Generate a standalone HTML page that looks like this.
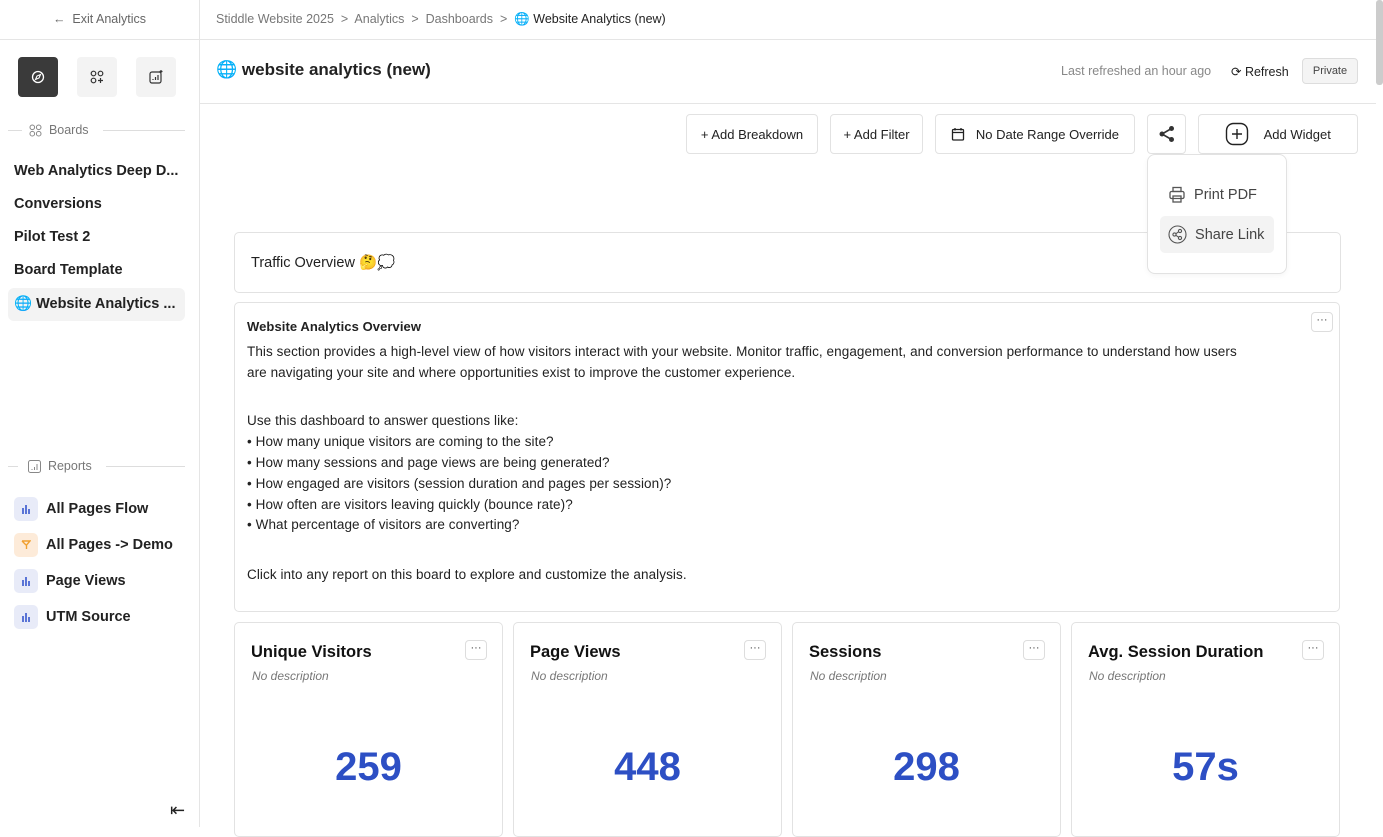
<!DOCTYPE html>
<html><head><style>
*{box-sizing:border-box;margin:0;padding:0}
body{width:1383px;height:827px;overflow:hidden;font-family:"Liberation Sans",sans-serif;background:#fff;color:#1f1f1f;position:relative}
.abs{position:absolute}
.side{left:0;top:0;width:200px;height:827px;border-right:1px solid #e5e5e5}
.btn{position:absolute;border:1px solid #e2e2e2;border-radius:4px;height:40px;top:114px;font-size:13px;display:flex;align-items:center;justify-content:center;color:#222;background:#fff}
.nav{position:absolute;left:14px;font-size:14.5px;font-weight:bold;color:#222}
.rep{position:absolute;left:14px;font-size:14.5px;font-weight:bold;color:#222;display:flex;align-items:center}
.ic{width:24px;height:24px;border-radius:5px;background:#e8ebf8;margin-right:8px;display:flex;align-items:center;justify-content:center}
.card{position:absolute;top:622px;width:269px;height:215px;border:1px solid #e2e2e2;border-radius:5px}
.card h3{position:absolute;left:16px;top:20px;font-size:16.5px;font-weight:bold;color:#111}
.card i{position:absolute;left:17px;top:46px;font-size:12px;color:#777}
.card .n{position:absolute;left:0;right:0;top:122px;text-align:center;font-size:40px;font-weight:bold;color:#2d4fc4}
.dots{position:absolute;width:22px;height:20px;border:1px solid #ddd;border-radius:4px;font-size:11px;text-align:center;line-height:14px;color:#444}
</style></head><body>
<div class="abs side">
 <div class="abs" style="left:0;top:0;width:199px;height:40px;border-bottom:1px solid #e5e5e5;font-size:12.5px;color:#666;text-align:center;line-height:38px">← &nbsp;Exit Analytics</div>
 <div class="abs" style="left:18px;top:57px;width:40px;height:40px;border-radius:4px;background:#3a3a3a;display:flex;align-items:center;justify-content:center"><svg width="14" height="14" viewBox="0 0 14 14"><circle cx="7" cy="7" r="5.5" fill="none" stroke="#fff" stroke-width="1.3"/><path d="M9.5 4.5 L8 8 L4.5 9.5 L6 6Z" fill="none" stroke="#fff" stroke-width="1.1"/></svg></div>
 <div class="abs" style="left:77px;top:57px;width:40px;height:40px;border-radius:4px;background:#f3f3f3;display:flex;align-items:center;justify-content:center"><svg width="14" height="14" viewBox="0 0 14 14" fill="none" stroke="#333" stroke-width="1.2"><circle cx="3.5" cy="3.5" r="2.3"/><circle cx="10.5" cy="3.5" r="2.3"/><circle cx="3.5" cy="10.5" r="2.3"/><path d="M10.5 8v5M8 10.5h5"/></svg></div>
 <div class="abs" style="left:136px;top:57px;width:40px;height:40px;border-radius:4px;background:#f3f3f3;display:flex;align-items:center;justify-content:center"><svg width="14" height="14" viewBox="0 0 14 14" fill="none" stroke="#333" stroke-width="1.2"><rect x="1" y="2" width="11" height="11" rx="2"/><path d="M4 10v-1M6.5 10V7M9 10V5M12 0v3M10.5 1.5h3"/></svg></div>
 <div class="abs" style="left:8px;top:130px;width:14px;border-top:1px solid #ddd"></div>
 <div class="abs" style="left:29px;top:123px;font-size:12.5px;color:#777;display:flex;align-items:center"><svg width="13" height="13" viewBox="0 0 13 13" fill="none" stroke="#888" stroke-width="1"><circle cx="3.3" cy="3.3" r="2.3"/><circle cx="9.7" cy="3.3" r="2.3"/><circle cx="3.3" cy="9.7" r="2.3"/><circle cx="9.7" cy="9.7" r="2.3"/></svg>&nbsp;&nbsp;Boards</div>
 <div class="abs" style="left:103px;top:130px;width:82px;border-top:1px solid #ddd"></div>
 <div class="nav" style="top:163px">Web Analytics Deep D...</div>
 <div class="nav" style="top:196px">Conversions</div>
 <div class="nav" style="top:229px">Pilot Test 2</div>
 <div class="nav" style="top:262px">Board Template</div>
 <div class="abs" style="left:8px;top:288px;width:177px;height:33px;border-radius:6px;background:#f3f3f3"></div>
 <div class="nav" style="top:295px">🌐 Website Analytics ...</div>
 <div class="abs" style="left:8px;top:466px;width:10px;border-top:1px solid #ddd"></div>
 <div class="abs" style="left:28px;top:459px;font-size:12.5px;color:#777;display:flex;align-items:center"><svg width="13" height="13" viewBox="0 0 13 13" fill="none" stroke="#888" stroke-width="1"><rect x="0.5" y="0.5" width="12" height="12" rx="2"/><path d="M4 10V9M6.5 10V7M9 10V4"/></svg>&nbsp;&nbsp;Reports</div>
 <div class="abs" style="left:106px;top:466px;width:79px;border-top:1px solid #ddd"></div>
 <div class="rep" style="top:497px"><div class="ic"><svg width="10" height="10" viewBox="0 0 10 10" fill="#5a74d6"><rect x="1" y="4" width="2" height="6"/><rect x="4" y="1" width="2" height="9"/><rect x="7" y="5" width="2" height="5"/></svg></div>All Pages Flow</div>
 <div class="rep" style="top:533px"><div class="ic" style="background:#fdebd9"><svg width="10" height="10" viewBox="0 0 10 10" fill="none" stroke="#f0a030" stroke-width="1.4"><path d="M1 1h8L5.5 5v4M5 5L1 1"/></svg></div>All Pages -&gt; Demo</div>
 <div class="rep" style="top:569px"><div class="ic"><svg width="10" height="10" viewBox="0 0 10 10" fill="#5a74d6"><rect x="1" y="4" width="2" height="6"/><rect x="4" y="1" width="2" height="9"/><rect x="7" y="5" width="2" height="5"/></svg></div>Page Views</div>
 <div class="rep" style="top:605px"><div class="ic"><svg width="10" height="10" viewBox="0 0 10 10" fill="#5a74d6"><rect x="1" y="4" width="2" height="6"/><rect x="4" y="1" width="2" height="9"/><rect x="7" y="5" width="2" height="5"/></svg></div>UTM Source</div>
 <div class="abs" style="left:170px;top:800px;font-size:18px;color:#222">⇤</div>
</div>
<div class="abs" style="left:200px;top:0;width:1176px;height:40px;border-bottom:1px solid #e5e5e5;font-size:12.5px;color:#777;line-height:39px;padding-left:16px">Stiddle Website 2025 &nbsp;&gt;&nbsp; Analytics &nbsp;&gt;&nbsp; Dashboards &nbsp;&gt;&nbsp; <span style="color:#222">🌐 Website Analytics (new)</span></div>
<div class="abs" style="left:1376px;top:0;width:7px;height:85px;background:#ccc;border-radius:3px"></div>
<div class="abs" style="left:200px;top:103px;width:1176px;border-top:1px solid #e5e5e5"></div>
<div class="abs" style="left:216px;top:60px;font-size:17px;font-weight:bold;color:#222">🌐 website analytics (new)</div>
<div class="abs" style="left:1061px;top:64px;font-size:12.5px;color:#888">Last refreshed an hour ago</div>
<div class="abs" style="left:1231px;top:64px;font-size:12.5px;color:#222">⟳ Refresh</div>
<div class="abs" style="left:1302px;top:58px;width:56px;height:26px;border:1px solid #ddd;border-radius:4px;background:#f4f4f4;font-size:11px;text-align:center;line-height:24px;color:#444">Private</div>
<div class="btn" style="left:686px;width:132px">+ Add Breakdown</div>
<div class="btn" style="left:830px;width:93px">+ Add Filter</div>
<div class="btn" style="left:935px;width:200px"><svg width="14" height="14" viewBox="0 0 14 14" fill="none" stroke="#222" stroke-width="1.3"><rect x="1.5" y="2.5" width="11" height="10.5" rx="1"/><path d="M1.5 5.5h11M4 1v2.5M10 1v2.5"/></svg>&nbsp;&nbsp;&nbsp;No Date Range Override</div>
<div class="btn" style="left:1147px;width:39px"><svg width="18" height="18" viewBox="0 0 18 18" fill="#333"><circle cx="13.5" cy="3.5" r="2.5"/><circle cx="4" cy="9" r="2.5"/><circle cx="13.5" cy="14.5" r="2.5"/><path d="M13.5 3.5L4 9l9.5 5.5" stroke="#333" stroke-width="1.6" fill="none"/></svg></div>
<div class="btn" style="left:1198px;width:160px"><svg width="24" height="24" viewBox="0 0 24 24" fill="none" stroke="#222" stroke-width="1.4"><rect x="1.5" y="1.5" width="21" height="21" rx="7"/><path d="M12 7v10M7 12h10"/></svg>&nbsp;&nbsp;&nbsp;&nbsp;Add Widget</div>
<div class="abs" style="left:234px;top:232px;width:1107px;height:61px;border:1px solid #e2e2e2;border-radius:5px;font-size:14.5px;padding:21px 0 0 16px;color:#222">Traffic Overview 🤔💭</div>
<div class="abs" style="left:1147px;top:154px;width:140px;height:120px;border:1px solid #e2e2e2;border-radius:8px;background:#fff;box-shadow:0 2px 6px rgba(0,0,0,.04)">
 <div class="abs" style="left:20px;top:31px;font-size:14.5px;color:#444;display:flex;align-items:center"><svg width="18" height="18" viewBox="0 0 18 18" fill="none" stroke="#555" stroke-width="1.3"><rect x="5" y="1.5" width="8" height="4"/><rect x="2" y="5.5" width="14" height="7" rx="1.5"/><rect x="5" y="10" width="8" height="6"/></svg>&nbsp;&nbsp;Print PDF</div>
 <div class="abs" style="left:12px;top:61px;width:114px;height:37px;border-radius:5px;background:#f3f3f3"></div>
 <div class="abs" style="left:20px;top:70px;font-size:14.5px;color:#444;display:flex;align-items:center"><svg width="19" height="19" viewBox="0 0 19 19" fill="none" stroke="#555" stroke-width="1.1"><circle cx="9.5" cy="9.5" r="8.5"/><circle cx="12" cy="6" r="1.6"/><circle cx="6.5" cy="9.5" r="1.6"/><circle cx="12" cy="13" r="1.6"/><path d="M10.6 6.8L7.9 8.7M7.9 10.3l2.7 1.9"/></svg>&nbsp;&nbsp;Share Link</div>
</div>
<div class="abs" style="left:234px;top:302px;width:1106px;height:310px;border:1px solid #e2e2e2;border-radius:5px;padding:14px 12px;font-size:13.5px;letter-spacing:0.08px;line-height:20.8px;color:#222">
 <div style="font-weight:bold;margin-bottom:4px;font-size:13px">Website Analytics Overview</div>
 <div>This section provides a high-level view of how visitors interact with your website. Monitor traffic, engagement, and conversion performance to understand how users<br>are navigating your site and where opportunities exist to improve the customer experience.</div>
 <div style="height:28px"></div>
 <div>Use this dashboard to answer questions like:</div>
 <div>• How many unique visitors are coming to the site?</div>
 <div>• How many sessions and page views are being generated?</div>
 <div>• How engaged are visitors (session duration and pages per session)?</div>
 <div>• How often are visitors leaving quickly (bounce rate)?</div>
 <div>• What percentage of visitors are converting?</div>
 <div style="height:29px"></div>
 <div>Click into any report on this board to explore and customize the analysis.</div>
 <div class="dots" style="left:1076px;top:9px">···</div>
</div>
<div class="card" style="left:234px"><h3>Unique Visitors</h3><i>No description</i><div class="n">259</div><div class="dots" style="left:230px;top:17px">···</div></div>
<div class="card" style="left:513px"><h3>Page Views</h3><i>No description</i><div class="n">448</div><div class="dots" style="left:230px;top:17px">···</div></div>
<div class="card" style="left:792px"><h3>Sessions</h3><i>No description</i><div class="n">298</div><div class="dots" style="left:230px;top:17px">···</div></div>
<div class="card" style="left:1071px"><h3>Avg. Session Duration</h3><i>No description</i><div class="n">57s</div><div class="dots" style="left:230px;top:17px">···</div></div>
</body></html>
